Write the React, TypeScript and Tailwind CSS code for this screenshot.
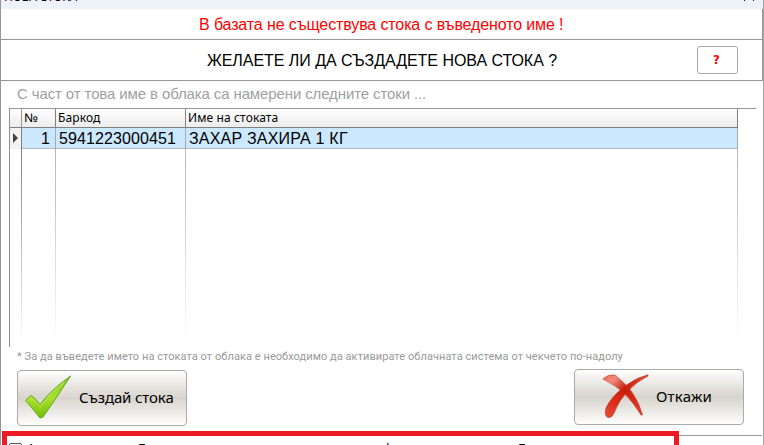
import type { ReactNode } from "react";

function Line({ children, className }: { children: ReactNode; className: string }) {
  return <div className={"whitespace-nowrap " + className}>{children}</div>;
}

function FadingRule() {
  return (
    <div className="bg-gradient-to-b from-[#b5b5b5] to-white pr-px">
      <div className="h-full bg-white" />
    </div>
  );
}

function CheckIcon() {
  return (
    <svg width="48" height="46" viewBox="0 0 48 46" className="shrink-0">
      <defs>
        <linearGradient id="green" x1="0" y1="0" x2="0" y2="1">
          <stop offset="0" stopColor="#8fca35" />
          <stop offset=".55" stopColor="#a8e02a" />
          <stop offset="1" stopColor="#73bd09" />
        </linearGradient>
      </defs>
      <path d="M1.500 25.500 7 20.500 Q11 23 16 29.500 Q28 14 46.500 1 Q33 22 19 42 L16 43 Q9 34 1.500 25.500Z" fill="url(#green)" stroke="#60a51b" strokeWidth="1" strokeLinejoin="round" />
      <path d="M3.500 25.500 7 22.300 16 32 Q28 16 40 7.500" fill="none" stroke="#bdec5c" strokeWidth="1" />
    </svg>
  );
}

function CrossIcon() {
  return (
    <svg width="48" height="46" viewBox="0 0 48 46" className="shrink-0">
      <defs>
        <linearGradient id="redDown" x1="0" y1="0" x2="1" y2="1">
          <stop offset="0" stopColor="#ef6f60" />
          <stop offset=".2" stopColor="#ee8a7d" />
          <stop offset=".45" stopColor="#c91e08" />
          <stop offset="1" stopColor="#e83925" />
        </linearGradient>
        <linearGradient id="redUp" x1="1" y1="0" x2="0" y2="1">
          <stop offset="0" stopColor="#e2503e" />
          <stop offset=".45" stopColor="#cb1c06" />
          <stop offset=".75" stopColor="#dd301b" />
          <stop offset="1" stopColor="#e6503f" />
        </linearGradient>
      </defs>
      <path d="M1 5 Q6 0 13 1 Q19 6 26 13 Q36 25 40.500 41 L39 41 Q31 28 22 19 Q13 11 1 5Z" fill="url(#redDown)" stroke="#c03a2b" strokeWidth=".6" />
      <path d="M46 .8 L46 2 Q34 8 26 17 Q17 26 12 39 Q10 44 6 43.500 Q2 42 4 34 Q9 23 22 13 Q33 4 46 .8Z" fill="url(#redUp)" stroke="#b32a1c" strokeWidth=".6" />
    </svg>
  );
}

export default function App() {
  return (
    <div className="relative h-[445px] w-[764px] overflow-hidden border-l border-[#969696] bg-white font-['Liberation_Sans',sans-serif] text-black">
      <header className="flex h-[9px] justify-between bg-[#edf2f8]">
        <Line className="-mt-[11px] ml-[3px] h-4 text-[12px] leading-4 tracking-[-0.2px] font-['Noto_Sans',sans-serif]">НОВА СТОКА</Line>
        <svg width="10" height="1" viewBox="0 0 10 1" className="mr-[10px]">
          <path d="M0 0h1v1H0zM9 0h1v1H9z" fill="#111" />
        </svg>
      </header>
      <div className="mr-px h-[31px] border-r border-b border-[#969696] pt-[7px] pl-[198px]">
        <Line className="text-[16px] leading-[18px] tracking-[-0.12px] text-[#ff0000]">В базата не съществува стока с въведеното име !</Line>
      </div>
      <div className="mr-px flex h-[41px] border-r border-b border-[#969696] pl-[206px]">
        <Line className="w-[490px] pt-[12px] text-[16px] leading-[18px] tracking-[-0.04px]">ЖЕЛАЕТЕ ЛИ ДА СЪЗДАДЕТЕ НОВА СТОКА ?</Line>
        <button className="mt-[6px] h-[28px] w-[41px] rounded-[3px] border border-[#a9a9a9] pr-[2px] text-[13px] leading-[26px] font-bold text-[#ff0000] font-['DejaVu_Sans_Condensed','DejaVu_Sans',sans-serif]">?</button>
      </div>
      <Line className="h-[27px] pt-[4px] pl-[16px] text-[15px] leading-[18px] tracking-[-0.12px] text-[#9f9f9f]">С част от това име в облака са намерени следните стоки ...</Line>

      <section className="ml-[8px] h-[239px] w-[747px] border-l border-[#8f8f8f]">
        <div className="h-px w-[746px] bg-[#969696]" />
        <div className="grid h-[19px] w-[728px] grid-cols-[12px_34px_130px_552px] border-b border-[#808080] bg-gradient-to-b from-white to-[#ededed] text-[12px] leading-[18px] tracking-[0.12px] font-['Noto_Sans',sans-serif]">
          <div className="border-r border-[#969696]" />
          <div className="border-r border-[#808080] pl-[2px]"><span className="inline-block origin-left scale-x-[1.15]">№</span></div>
          <div className="border-r border-[#808080] pl-[2px]">Баркод</div>
          <div className="border-r border-[#808080] pl-[2px]">Име на стоката</div>
        </div>
        <div className="grid h-[21px] w-[728px] grid-cols-[12px_34px_130px_552px] border-b border-[#b8b8b8] bg-[#cce8ff] text-[16px] leading-[22px]">
          <div className="flex items-center border-r border-[#808080] bg-[#f3f3f3] pb-[2px] pl-[3px]">
            <svg width="6" height="10" viewBox="0 0 6 10"><path d="m0 0 5 5-5 5Z" fill="#444" /></svg>
          </div>
          <div className="border-r border-[#aaa] pr-[5px] text-right">1</div>
          <div className="border-r border-[#aaa] pl-[3px] tracking-[0.1px]">5941223000451</div>
          <div className="border-r border-[#aaa] pl-[3px]"><Line className="tracking-[0.2px]">ЗАХАР ЗАХИРА 1 КГ</Line></div>
        </div>
        <div className="grid h-[197px] w-[728px] grid-cols-[12px_34px_130px_552px]">
          <div className="bg-gradient-to-b from-[#808080] to-white pr-px"><div className="h-full bg-white" /></div>
          <FadingRule />
          <FadingRule />
          <FadingRule />
        </div>
      </section>
      <Line className="h-[22px] pt-[3px] pl-[16px] text-[11px] leading-[14px] tracking-[0.065px] text-[#999] font-['Roboto',sans-serif]">* За да въведете името на стоката от облака е необходимо да активирате облачната система от чекчето по-надолу</Line>
      <div className="flex h-[62px] justify-between pr-[20px] pl-[16px] text-[15px] font-['Noto_Sans',sans-serif]">
        <button className="mt-px flex h-[56px] w-[170px] items-center rounded-[4px] border border-[#aaa] bg-linear-to-b from-[#fefefe] via-[#d8d4cd] to-[#fefefe] pl-[6px]">
          <CheckIcon /><span className="ml-[7px] pb-[2px] whitespace-nowrap tracking-[-0.12px]">Създай стока</span>
        </button>
        <button className="flex h-[56px] w-[170px] items-center rounded-[4px] border border-[#aaa] bg-linear-to-b from-[#fefefe] via-[#d8d4cd] to-[#fefefe] pl-[27px]">
          <CrossIcon /><span className="ml-[6px] pb-[2px] whitespace-nowrap tracking-[0.2px]">Откажи</span>
        </button>
      </div>
      <footer className="flex h-[14px]">
        <div className="ml-px h-[24px] w-[677px] shrink-0 border-[5px] border-b-0 border-[#ed1c24] pl-[2px]">
          <div className="flex pt-[3px] text-[13px] leading-[18px] whitespace-nowrap font-['Noto_Sans',sans-serif]">
            <div className="mt-[4px] mr-[5px] size-[13px] shrink-0 rounded-[2px] border border-[#555]" />
            <span className="w-[111px]">Активиране на</span>
            <span className="w-[245px]">База</span>
            <span className="w-[135px]">ф</span>
            <span>База</span>
          </div>
        </div>
        <div className="mt-[4px] mr-[2px] h-px grow bg-[#969696]" />
      </footer>
      <div className="absolute top-0 right-0 h-full w-px bg-[#a5a5a5]" />
    </div>
  );
}
